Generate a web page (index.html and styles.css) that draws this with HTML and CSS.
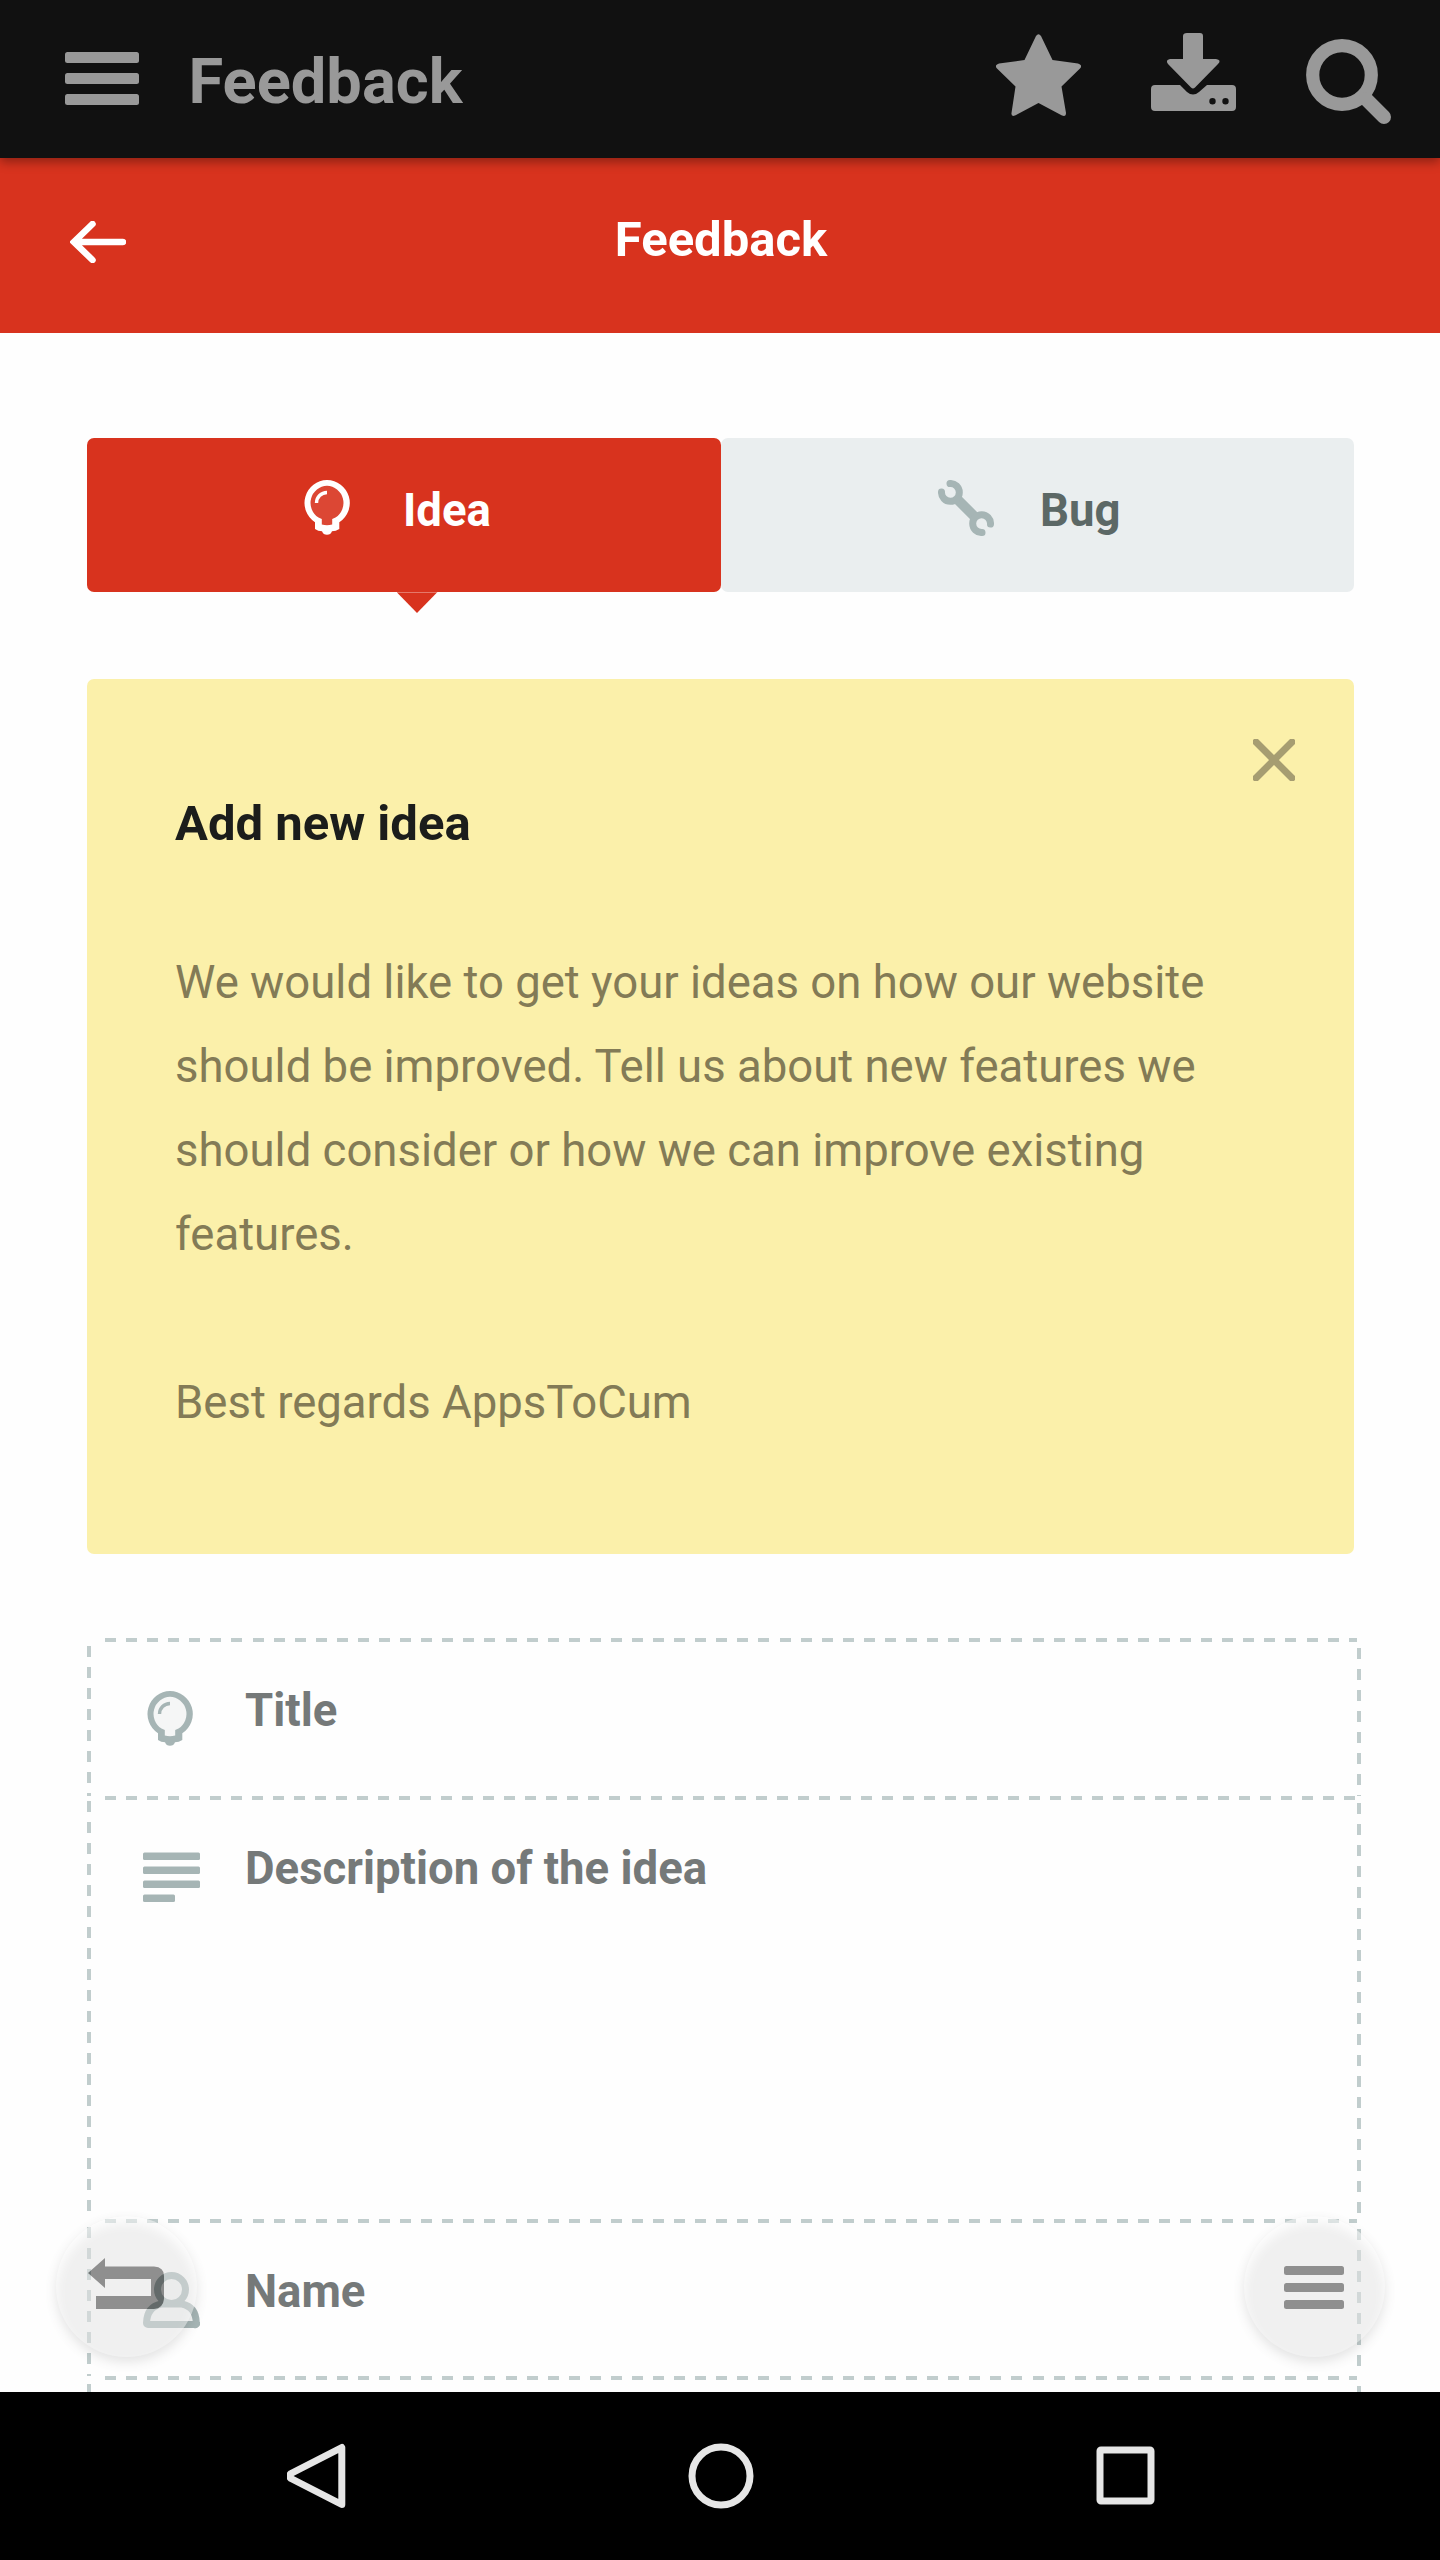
FILE: index.html
```html
<!DOCTYPE html>
<html lang="en">
<head>
<meta charset="utf-8">
<title>Feedback</title>
<link rel="stylesheet" href="styles.css">
</head>
<body>
<svg class="defs" width="0" height="0">
  <symbol id="bulb" viewBox="0 0 46 56">
    <path class="bulb-fill" d="M23 3A20 20 0 0 0 13 39.500L18 46H28L33 39.500A20 20 0 0 0 23 3Z"/>
    <path fill="currentColor" fill-rule="evenodd" d="M23 0A23 23 0 0 1 35.300 42.300V49Q32 51.300 28 51.300A5.300 5.300 0 0 1 18 51.300Q14 51.300 11 49V42.300A23 23 0 0 1 23 0ZM23 5.800A17.200 17.200 0 0 0 14.500 37.500L17.800 39V44.500Q23 46 28.200 44.500V39L31.500 37.500A17.200 17.200 0 0 0 23 5.800Z"/>
    <path d="M12.500 23A10.500 10.500 0 0 1 23 12.500" fill="none" stroke="currentColor" stroke-width="3.400"/>
  </symbol>
</svg>
<div class="screen">
  <header class="appbar">
    <svg class="burger" viewBox="0 0 74 53"><rect width="74" height="11" rx="2.500"/><rect y="21" width="74" height="11" rx="2.500"/><rect y="42" width="74" height="11" rx="2.500"/></svg>
    <span class="appbar-title">Feedback</span>
    <svg class="tool star" viewBox="0 0 85 82"><path d="M40 2Q42.500-1.500 45 2L56.500 26L82 29.500Q87 31 84 34.500L65.500 52.500L70 79Q70 83 66 81.500L42.500 69L19 81.500Q15 83 15.500 79L19.500 52.500L1 34.500Q-2 31 3 29.500L28.500 26Z"/></svg>
    <svg class="tool save" viewBox="0 0 85 78"><path d="M36 0H49Q52 0 52 3V26H65Q71 27 67 31L44 54.500Q42 56.500 40 54.500L17 31Q14 27 19 26H32V3Q32 0 36 0Z"/><path fill-rule="evenodd" d="M4 52H29L36 59Q42 64 48 59L56 52H81Q85 52 85 56V74Q85 78 81 78H4Q0 78 0 74V56Q0 52 4 52ZM61.500 65A3.200 3.200 0 1 0 61.500 71.400A3.200 3.200 0 1 0 61.500 65ZM74.500 65A3.200 3.200 0 1 0 74.500 71.400A3.200 3.200 0 1 0 74.500 65Z"/></svg>
    <svg class="tool find" viewBox="0 0 85 85"><circle cx="36" cy="36" r="29.300" fill="none" stroke="#999" stroke-width="13.200"/><path d="M60 60L78 78" stroke="#999" stroke-width="14" stroke-linecap="round"/></svg>
  </header>
  <div class="titlebar">
    <svg class="back" viewBox="0 0 56 42"><path d="M22.500 3L4 21L22.500 39M5 21H53" fill="none" stroke="#fff" stroke-width="6.500" stroke-linecap="round"/></svg>
    <h1>Feedback</h1>
  </div>
  <main>
    <nav class="tabs">
      <div class="tab active"><svg class="bulb"><use href="#bulb"/></svg><span>Idea</span></div>
      <div class="tab"><svg class="wrench" viewBox="0 0 56 56"><g fill="none" stroke="currentColor"><path d="M20 20L36 36" stroke-width="10"/><path d="M3.500 12A8.900 8.900 0 1 0 12 3.500M52.500 44A8.900 8.900 0 1 0 44 52.500" stroke-width="7" stroke-linecap="round"/></g></svg><span>Bug</span></div>
    </nav>
    <section class="note">
      <svg class="close" viewBox="0 0 42 42"><path d="M3 3L39 39M39 3L3 39" stroke="#a69d71" stroke-width="7" stroke-linecap="round"/></svg>
      <h2>Add new idea</h2>
      <p>We would like to get your ideas on how our website should be improved. Tell us about new features we should consider or how we can improve existing features.</p>
      <p>Best regards AppsToCum</p>
    </section>
    <form class="form">
      <div class="field"><svg class="bulb"><use href="#bulb"/></svg><span>Title</span></div>
      <div class="field tall"><svg class="lines" viewBox="0 0 57 57"><g fill="currentColor"><rect y="3.500" width="57" height="7.500" rx="1.500"/><rect y="17.500" width="57" height="7.500" rx="1.500"/><rect y="31.500" width="57" height="7.500" rx="1.500"/><rect y="45.500" width="32" height="7.500" rx="1.500"/></g></svg><span>Description of the idea</span></div>
      <div class="field"><svg class="lines" viewBox="0 0 57 57"><g fill="#f5f7f7" stroke="currentColor" stroke-width="7"><path d="M5 52.500H52A1 1 0 0 0 53.300 51Q53 35 39 32H18Q4 35 3.500 51A1.500 1.500 0 0 0 5 52.500Z"/><circle cx="28.500" cy="17.500" r="14"/></g></svg><span>Name</span></div>
      <div class="field"></div>
    </form>
  </main>
  <div class="fab left"><svg viewBox="0 0 76 51"><path d="M0 15L17 0V8.500H66Q76 9 76 18V41Q75 50.500 66 51H8V38H63V21H17V30Z"/></svg></div>
  <div class="fab right"><svg viewBox="0 0 60 43"><rect width="60" height="9" rx="2.500"/><rect y="17" width="60" height="9" rx="2.500"/><rect y="34" width="60" height="9" rx="2.500"/></svg></div>
  <footer class="navbar">
    <svg viewBox="0 0 68 68"><path d="M54.800 5.500V62.500L4 36.500Q1 34 4 31.500Z"/></svg>
    <svg viewBox="0 0 68 68"><circle cx="34" cy="34" r="29"/></svg>
    <svg viewBox="0 0 68 68"><rect x="8" y="8" width="51" height="51" rx="1"/></svg>
  </footer>
</div>
</body>
</html>
```

FILE: styles.css
```css
* { box-sizing: border-box; }
body { margin: 0; background: #fefefe; font-family: Roboto, sans-serif; }
svg { display: block; flex: none; }
.defs { position: absolute; }
.bulb-fill { fill: currentColor; opacity: .1; }
.screen { position: relative; width: 1440px; height: 2560px; overflow: hidden; display: flex; flex-direction: column; }
.appbar { position: relative; z-index: 1; flex: none; height: 158px; padding: 0 49px 0 64.500px; display: flex; align-items: flex-start; background: #111; fill: #999; color: #999; box-shadow: 0 4px 10px rgba(0,0,0,.35); }
.burger { width: 74px; height: 53px; margin-top: 52px; }
.appbar-title { margin: 43px auto 0 50px; font-size: 63.200px; line-height: 77px; font-weight: 700; }
.star { width: 85px; height: 82px; margin: 34px 70px 0 0; }
.save { width: 85px; height: 78px; margin: 33px 70px 0 0; }
.find { width: 85px; height: 85px; margin-top: 39px; }
.titlebar { flex: none; height: 175px; padding: 0 69px 0 70px; display: grid; grid-template-columns: 56px 1fr 55px; align-items: start; background: #d8331e; color: #fff; }
.back { width: 56px; height: 42px; margin-top: 63px; }
h1 { margin: 53px 0 0; font-size: 49px; line-height: 57px; text-align: center; }
main { flex: 1; min-height: 0; overflow: hidden; padding: 105px 79px 0 87px; }
.tabs { display: flex; width: 1267px; height: 154px; }
.tab { position: relative; flex: 1; display: flex; padding: 42px 0 0 217px; border-radius: 7px; background: #eaeeef; font-size: 45.500px; line-height: 54px; font-weight: 700; color: #5c6866; }
.tab span { margin: 4px 0 0 53px; }
.tab svg { color: #a6b5b5; }
.tab.active { background: #d8331e; color: #fff; }
.tab.active svg { color: #fff; }
.tab.active::after { content: ""; position: absolute; left: 309.500px; top: 154px; width: 41px; height: 21px; background: linear-gradient(#e5786a 0 1px, #d8331e 1px); clip-path: polygon(0 0, 100% 0, 50% 100%); }
.bulb { width: 46px; height: 56px; }
.wrench { width: 56px; height: 56px; }
.tab .wrench + span { margin-left: 46.500px; }
.note { position: relative; width: 1267px; height: 875px; margin-top: 87px; padding: 103px 88px 0; border-radius: 7px; background: #fbf0aa; }
.note .close { position: absolute; right: 59px; top: 60px; width: 42px; height: 42px; }
.note h2 { margin: 0 0 75px; font-size: 49px; line-height: 84px; color: #1b1d1b; }
.note p { margin: 0 0 84px; font-size: 45.500px; line-height: 84px; color: #837b56; width: 1060px; }
.form { margin-top: 84px; width: 1274px; }
.field { --gap: 21.080px; --down: 8px; height: 157.700px; display: flex; padding: 0 60px; font-size: 45.500px; line-height: 54px; font-weight: 700; color: #757979;
  background:
    repeating-linear-gradient(90deg, #c1cdcd 0 11px, transparent 11px var(--gap)) 18px 0 / 1252px 4px no-repeat,
    repeating-linear-gradient(#c1cdcd 0 11px, transparent 11px 21px) 0 var(--down) / 4px 100% no-repeat,
    repeating-linear-gradient(#c1cdcd 0 11px, transparent 11px 21px) 100% calc(var(--down) + 2px) / 4px 100% no-repeat; }
.field svg { margin-top: 53px; color: #a6b5b5; }
.field span { margin: 46px 0 0 52px; }
.lines { width: 57px; height: 57px; }
.field .lines { margin-left: -4px; }
.field .lines + span { margin-left: 45px; }
.field.tall { --gap: 21px; --down: 5px; height: 423px; }
.fab { position: absolute; top: 2216px; width: 141px; height: 141px; border-radius: 50%; background: #e3e3e3; opacity: .5; box-shadow: 0 5px 11px rgba(0,0,0,.2), inset 0 7px 12px #fff; fill: #222; }
.left { left: 56px; padding: 42px 0 0 32px; }
.left svg { width: 76px; height: 51px; }
.right { left: 1243.500px; padding: 50px 0 0 40.500px; }
.right svg { width: 60px; height: 43px; }
.navbar { position: relative; flex: none; height: 168px; display: flex; justify-content: space-between; padding: 50px 280px 0 287px; background: #000; }
.navbar svg { width: 68px; height: 68px; fill: none; stroke: #e6e6e6; stroke-width: 7px; stroke-linejoin: round; }
.navbar svg:nth-child(2) { margin-left: -6px; }
```
